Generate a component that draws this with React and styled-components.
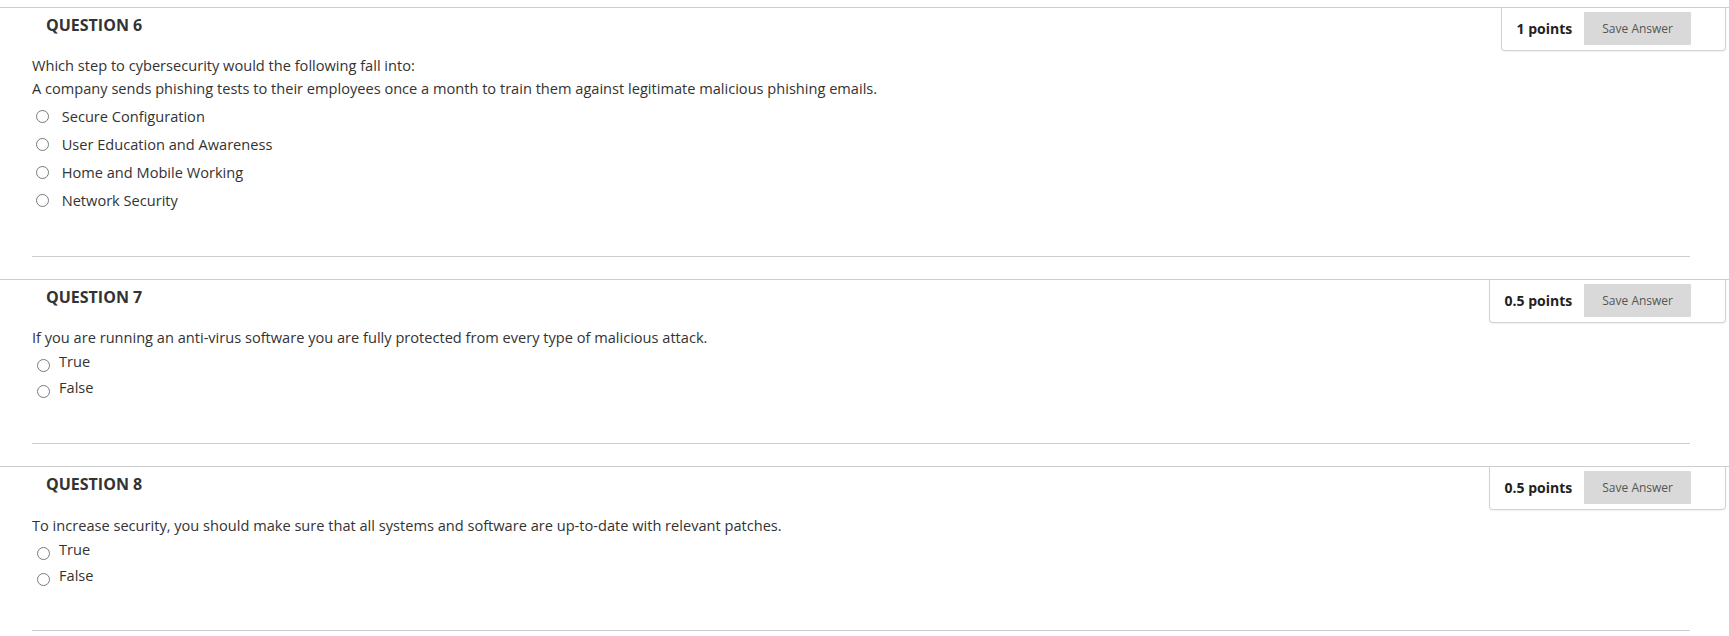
import React from 'react';
import styled, { createGlobalStyle } from 'styled-components';

const GlobalStyle = createGlobalStyle`
  html, body {
    margin: 0;
    padding: 0;
    background: #fff;
  }
  body {
    font-family: "Open Sans", "Liberation Sans", sans-serif;
    color: #333;
  }
`;

const Page = styled.div`
  padding-top: 7px;
  width: 1729px;
`;

const Question = styled.section`
  border-top: 1px solid #cdcdcd;
  margin-bottom: 22px;
`;

const Header = styled.div`
  display: flex;
  justify-content: space-between;
  align-items: flex-start;
`;

const Title = styled.h3`
  margin: 0;
  padding: 6px 0 0 46px;
  font-size: 16px;
  line-height: 22px;
  font-weight: 700;
  color: #333;
`;

const PointsBox = styled.div`
  display: flex;
  align-items: center;
  gap: 12px;
  height: 43px;
  box-sizing: border-box;
  padding: 4px 34px 6px 15px;
  margin-right: 3px;
  border: 1px solid #d2d2d2;
  border-top: none;
  border-radius: 0 0 4px 4px;
  box-shadow: 0 1px 2px rgba(0, 0, 0, 0.06);
`;

const Points = styled.span`
  font-size: 14px;
  font-weight: 700;
  color: #222;
`;

const SaveButton = styled.button`
  height: 33px;
  padding: 0 18px;
  border: none;
  border-radius: 1px;
  background: #d9d9d9;
  color: #555;
  font-family: "Open Sans", "Liberation Sans", sans-serif;
  font-size: 12px;
`;

const Body = styled.div`
  padding: ${(p) => p.$pad}px 0 0 32px;
`;

const Prompt = styled.p`
  margin: 0;
  font-size: 14.6px;
  line-height: 23px;
  color: #333;
`;

const Options = styled.div`
  display: flex;
  flex-direction: column;
  margin-top: ${(p) => (p.$tf ? '0' : '2px')};
`;

const Option = styled.label`
  display: flex;
  align-items: ${(p) => (p.$tf ? 'flex-start' : 'center')};
  height: ${(p) => (p.$tf ? '26px' : '28px')};
  gap: ${(p) => (p.$tf ? '9px' : '12.7px')};
  padding-left: ${(p) => (p.$tf ? '5px' : '4px')};
  font-size: 14.6px;
  color: #333;
`;

const Radio = styled.span`
  flex: none;
  width: 13px;
  height: 13px;
  box-sizing: border-box;
  border: 1px solid #7a7a7a;
  border-radius: 50%;
  background: #fff;
  margin-top: ${(p) => (p.$tf ? '10px' : '0')};
`;

const OptionText = styled.span`
  line-height: ${(p) => (p.$tf ? '26px' : '20px')};
  margin-top: ${(p) => (p.$tf ? '-1px' : '0')};
`;

const Separator = styled.hr`
  margin: ${(p) => p.$gap}px 39px 0 0;
  border: none;
  border-top: 1px solid #cdcdcd;
  height: 0;
`;

const questions = [
  {
    num: 6,
    points: '1 points',
    text: [
      'Which step to cybersecurity would the following fall into:',
      'A company sends phishing tests to their employees once a month to train them against legitimate malicious phishing emails.',
    ],
    tf: false,
    options: [
      'Secure Configuration',
      'User Education and Awareness',
      'Home and Mobile Working',
      'Network Security',
    ],
    pad: 3,
    gap: 42,
  },
  {
    num: 7,
    points: '0.5 points',
    text: ['If you are running an anti-virus software you are fully protected from every type of malicious attack.'],
    tf: true,
    options: ['True', 'False'],
    pad: 3,
    gap: 42,
  },
  {
    num: 8,
    points: '0.5 points',
    text: ['To increase security, you should make sure that all systems and software are up-to-date with relevant patches.'],
    tf: true,
    options: ['True', 'False'],
    pad: 4,
    gap: 41,
  },
];

const QuestionBlock = ({ q }) => (
  <Question>
    <Header>
      <Title>QUESTION {q.num}</Title>
      <PointsBox>
        <Points>{q.points}</Points>
        <SaveButton type="button">Save Answer</SaveButton>
      </PointsBox>
    </Header>
    <Body $pad={q.pad}>
      {q.text.map((line) => (
        <Prompt key={line}>{line}</Prompt>
      ))}
      <Options $tf={q.tf}>
        {q.options.map((opt) => (
          <Option key={opt} $tf={q.tf}>
            <Radio $tf={q.tf} />
            <OptionText $tf={q.tf}>{opt}</OptionText>
          </Option>
        ))}
      </Options>
      <Separator $gap={q.gap} />
    </Body>
  </Question>
);

export default function App() {
  return (
    <>
      <GlobalStyle />
      <Page>
        {questions.map((q) => (
          <QuestionBlock key={q.num} q={q} />
        ))}
      </Page>
    </>
  );
}
